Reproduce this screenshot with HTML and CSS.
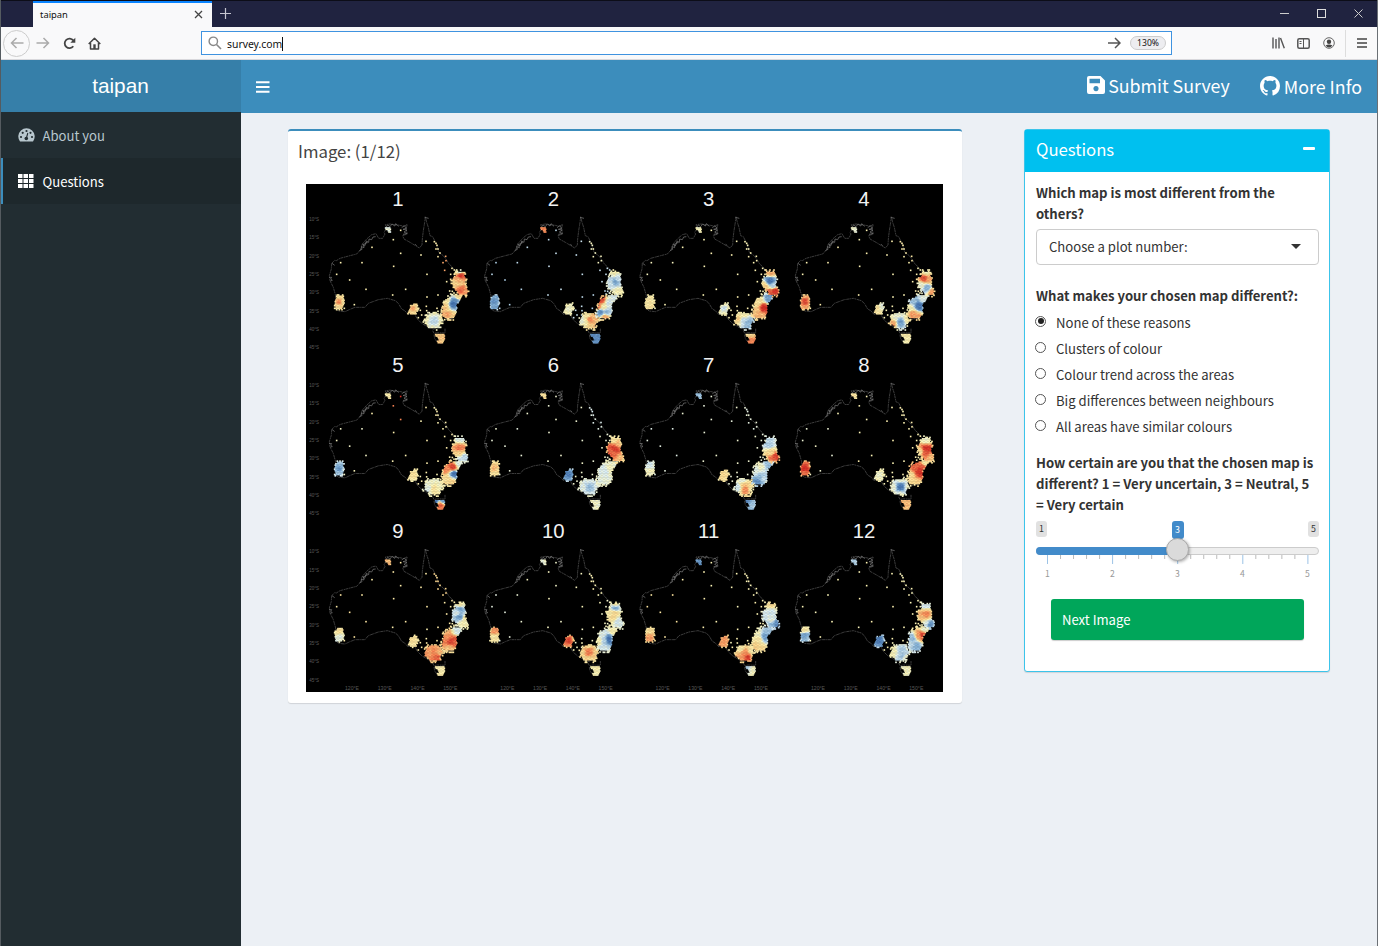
FILE: index.html
```html
<!DOCTYPE html>
<html lang="en">
<head>
<meta charset="utf-8">
<title>taipan</title>
<link rel="stylesheet" href="styles.css">
</head>
<body>
<div class="window">
  <div class="tabbar">
    <div class="tab"><span>taipan</span>
      <svg width="9" height="9" viewBox="0 0 9 9"><path d="M1 1l7 7M8 1l-7 7" stroke="#444" stroke-width="1.3" fill="none"/></svg>
    </div>
    <svg class="newtab" width="11" height="11" viewBox="0 0 11 11"><path d="M5.5 0v11M0 5.5h11" stroke="#c5c5d0" stroke-width="1.2"/></svg>
    <div class="winctl">
      <svg width="9" height="9" viewBox="0 0 9 9"><path d="M0 4.5h9" stroke="#ccc" stroke-width="1"/></svg>
      <svg width="9" height="9" viewBox="0 0 9 9"><rect x=".5" y=".5" width="8" height="8" stroke="#ddd" fill="none"/></svg>
      <svg width="9" height="9" viewBox="0 0 9 9"><path d="M.5.5l8 8M8.5.5l-8 8" stroke="#ccc" stroke-width="1"/></svg>
    </div>
  </div>
  <div class="toolbar">
    <div class="navbtns">
      <span class="back"><svg width="14" height="12" viewBox="0 0 14 12"><path d="M13.500 6H1.500M6.500 1L1.500 6l5 5" stroke="#aaa" stroke-width="1.5" fill="none"/></svg></span>
      <svg class="fwd" width="14" height="12" viewBox="0 0 14 12"><path d="M.5 6h12M7.500 1l5 5-5 5" stroke="#aaa" stroke-width="1.5" fill="none"/></svg>
      <svg class="reload" width="13" height="13" viewBox="0 0 13 13"><path d="M10.300 9.300A4.800 4.800 0 1 1 10.300 3.400" stroke="#444" stroke-width="1.800" fill="none"/><path d="M12.300.8v5H7.300z" fill="#444"/></svg>
      <svg width="13" height="13" viewBox="0 0 13 13"><path d="M.7 7L6.500 1.200 12.300 7M2.500 6v6h8V6" stroke="#444" stroke-width="1.500" fill="none" stroke-linejoin="round"/><path d="M5.300 7.300h2.400V12H5.300z" fill="#444"/></svg>
    </div>
    <div class="urlbar">
      <svg width="14" height="14" viewBox="0 0 14 14"><circle cx="5.300" cy="5.300" r="4.200" stroke="#888" stroke-width="1.400" fill="none"/><path d="M8.500 8.500l4.500 4.500" stroke="#888" stroke-width="1.600"/></svg>
      <span class="url">survey.com</span>
      <svg class="go" width="13" height="12" viewBox="0 0 13 12"><path d="M0 6h12M7 1l5 5-5 5" stroke="#555" stroke-width="1.500" fill="none"/></svg>
      <span class="zoom">130%</span>
    </div>
    <div class="tools">
      <svg width="13" height="12" viewBox="0 0 13 12"><path d="M1 .5v11M4 2v9.500M7 .5v11M8.500 1l3.800 10.300" stroke="#555" stroke-width="1.400" fill="none"/></svg>
      <svg width="13" height="11" viewBox="0 0 13 11"><rect x=".8" y=".8" width="11.400" height="9.400" rx="1.500" stroke="#555" stroke-width="1.500" fill="none"/><path d="M6.500 1v9M2.500 3.500h2M2.500 5.500h2" stroke="#555"/></svg>
      <svg width="12" height="12" viewBox="0 0 12 12"><circle cx="6" cy="6" r="5.300" stroke="#666" stroke-width="1" fill="none"/><circle cx="6" cy="4.700" r="2.200" fill="#444"/><path d="M2.500 8.500q3.500-2 7 0-1.500 2-3.500 2t-3.500-2z" fill="#444"/></svg>
      <i class="sep"></i>
      <svg width="10" height="10" viewBox="0 0 10 10"><path d="M0 1h10M0 5h10M0 9h10" stroke="#444" stroke-width="1.400"/></svg>
    </div>
  </div>

  <div class="app">
    <aside class="sidebar">
      <div class="logo">taipan</div>
      <a class="item"><svg width="17" height="14" viewBox="0 0 17 14"><path d="M2 13.500A8.200 8.200 0 1 1 15 13.500z" fill="#b8c7ce"/><g fill="#222d32"><circle cx="3" cy="9" r="1.100"/><circle cx="4.700" cy="4.800" r="1.100"/><circle cx="8.500" cy="3" r="1.100"/><circle cx="12.500" cy="4.800" r="1.100"/><circle cx="14" cy="9" r="1.100"/><circle cx="8.300" cy="10.500" r="1.800"/></g><path d="M8.300 10.500L9.800 5" stroke="#222d32" stroke-width="1.100"/></svg><span>About you</span></a>
      <a class="item active"><svg width="16" height="14" viewBox="0 0 16 14"><path fill="#fff" d="M0 0h4.500v4H0zM5.500 0H10v4H5.500zM11 0h4.500v4H11zM0 5h4.500v4H0zM5.500 5H10v4H5.500zM11 5h4.500v4H11zM0 10h4.500v4H0zM5.500 10H10v4H5.500zM11 10h4.500v4H11z"/></svg><span>Questions</span></a>
    </aside>
    <div class="main">
      <header class="navbar">
        <svg width="14" height="12" viewBox="0 0 14 12"><path d="M0 1.300h13.500M0 6h13.500M0 10.700h13.500" stroke="#fff" stroke-width="2.100"/></svg>
        <div class="links">
          <a><svg width="18" height="18" viewBox="0 0 18 18"><path fill="#fff" fill-rule="evenodd" d="M2 0h11.500L18 4.500V16q0 2-2 2H2q-2 0-2-2V2Q0 0 2 0zM2.500 2.700v4.500H13V2.700zM9 10a2.600 2.600 0 1 0 .01 0z"/></svg><span>Submit Survey</span></a>
          <a><svg width="20" height="20" viewBox="0 0 16 16"><path fill="#fff" d="M8 0C3.580 0 0 3.580 0 8c0 3.540 2.290 6.530 5.470 7.590.4.070.55-.17.55-.38 0-.19-.01-.82-.01-1.490-2.010.37-2.530-.49-2.690-.94-.09-.23-.48-.94-.82-1.130-.28-.15-.68-.52-.01-.53.63-.01 1.080.58 1.230.82.72 1.210 1.870.87 2.330.66.07-.52.28-.87.51-1.070-1.780-.2-3.640-.89-3.640-3.950 0-.87.31-1.590.82-2.150-.08-.2-.36-1.020.08-2.120 0 0 .67-.21 2.200.82.64-.18 1.320-.27 2-.27s1.360.09 2 .27c1.530-1.040 2.200-.82 2.200-.82.44 1.100.16 1.920.08 2.120.51.56.82 1.270.82 2.150 0 3.070-1.870 3.750-3.650 3.950.29.25.54.73.54 1.480 0 1.070-.01 1.930-.01 2.200 0 .21.15.46.55.38A8 8 0 0 0 16 8c0-4.420-3.580-8-8-8z"/></svg><span>More Info</span></a>
        </div>
      </header>
      <section class="content">
        <div class="box plot">
          <h3>Image: (1/12)</h3>
          <svg id="maps" viewBox="0 0 1911 1524"></svg>
        </div>
        <div class="box questions">
          <div class="qhead"><span>Questions</span><i class="minus"></i></div>
          <div class="qbody">
            <label class="q">Which map is most different from the<br>others?</label>
            <div class="select"><span>Choose a plot number:</span><i class="caret"></i></div>
            <label class="q second">What makes your chosen map different?:</label>
            <div class="radio on"><i></i><span>None of these reasons</span></div>
            <div class="radio"><i></i><span>Clusters of colour</span></div>
            <div class="radio"><i></i><span>Colour trend across the areas</span></div>
            <div class="radio"><i></i><span>Big differences between neighbours</span></div>
            <div class="radio"><i></i><span>All areas have similar colours</span></div>
            <label class="q third">How certain are you that the chosen map is<br>different? 1 = Very uncertain, 3 = Neutral, 5<br>= Very certain</label>
            <div class="slider">
              <div class="badges"><b>1</b><b class="cur">3</b><b>5</b></div>
              <div class="track"><div class="fill"></div><div class="knob"></div></div>
              <svg id="ticks" width="283" height="10" viewBox="0 0 283 10"></svg>
              <div class="nums"><span>1</span><span>2</span><span>3</span><span>4</span><span>5</span></div>
            </div>
            <div class="next">Next Image</div>
          </div>
        </div>
      </section>
    </div>
  </div>
</div>
<script src="maps.js"></script>
</body>
</html>
```
FILE: styles.css
```css
* { box-sizing: border-box; }
body { margin: 0; font-family: "Noto Sans CJK SC", "Noto Sans", sans-serif; font-size: 13.100px; color: #333; }
svg { display: block; flex: none; }
.window { width: 1378px; height: 946px; display: flex; flex-direction: column; overflow: hidden; border-left: 1px solid #555b60; border-right: 1px solid #6b7075; background: #ecf0f5; }
.tabbar { height: 27px; flex: none; background: #202340; border-top: 1px solid #0c0d18; display: flex; align-items: center; }
.tab { width: 179px; height: 26px; margin-left: 32px; background: #f9f9fa; border-top: 2px solid #0a84ff; display: flex; align-items: center; justify-content: space-between; padding: 0 9px 1px 7px; font: 9.400px "Noto Sans", sans-serif; color: #111; }
.newtab { margin: -2px 0 0 8px; }
.winctl { margin-left: auto; display: flex; gap: 28px; padding: 0 14px 1px 0; }
.toolbar { height: 33px; flex: none; background: #f9f9fa; border-bottom: 1px solid #d8d8dc; display: flex; align-items: center; }
.navbtns { width: 200px; display: flex; align-items: center; padding-left: 2px; }
.back { width: 27px; height: 27px; border: 1px solid #ccc; border-radius: 50%; display: flex; align-items: center; justify-content: center; }
.fwd { margin-left: 6px; }
.reload { margin: 0 12px 0 13px; }
.urlbar { width: 971px; height: 24px; border: 1px solid #3f93e0; background: #fff; display: flex; align-items: center; padding: 0 5px 0 6px; font: 11px "Noto Sans", sans-serif; color: #111; }
.url { margin-left: 5px; border-right: 1px solid #111; line-height: 14px; font-size: 10.400px; margin-top: 1px; }
.go { margin-left: auto; }
.zoom { margin-left: 9px; width: 36px; height: 14px; border: 1px solid #ccc; border-radius: 7px; background: #ededf0; font-size: 8.600px; line-height: 12px; text-align: center; }
.tools { margin-left: auto; display: flex; align-items: center; gap: 13px; padding-right: 10px; }
.tools svg:first-child { margin-right: -1px; }
.sep { width: 1px; height: 27px; background: #ddd; margin-right: -2px; margin-left: -3px; }
.app { flex: 1; display: flex; min-height: 0; }
.sidebar { width: 240px; background: #222d32; flex: none; }
.logo { height: 52px; background: #367fa9; color: #fff; font: 20.800px/52px "Liberation Sans", Arial, sans-serif; text-align: center; padding-right: 1px; }
.item { height: 46px; display: flex; align-items: center; gap: 7px; padding-left: 17px; color: #b8c7ce; line-height: 20px; }
.item span { padding: 1px 0 0 .5px; }
.item.active { background: #1e282c; color: #fff; border-left: 2px solid #3c8dbc; padding-left: 15px; gap: 8px; }
.main { flex: 1; }
.navbar { height: 53px; background: #3c8dbc; display: flex; align-items: center; justify-content: space-between; padding: 0 15px; color: #fff; }
.links { display: flex; gap: 30px; font-size: 17.800px; }
.links a { display: flex; align-items: center; gap: 4px; line-height: 26px; white-space: nowrap; }
.links a svg { margin-top: -2px; }
.links a span { margin-top: -2px; }
.links a:first-child svg { margin-top: -3px; }
.links a:first-child span { margin-top: -3px; }
.links a:first-child { gap: 3px; }
.content { display: flex; align-items: flex-start; justify-content: space-between; padding: 16px 47px 0; }
.box { background: #fff; border-radius: 3px; box-shadow: 0 1px 1px rgba(0,0,0,.12); }
.plot { width: 674px; height: 574px; border-top: 2px solid #3c8dbc; padding: 1px 18px 0; }
.plot h3 { margin: 0 0 0 -8px; font-weight: 400; font-size: 16.800px; line-height: 38px; height: 52px; color: #444; }
#maps { width: 637px; height: 508px; background: #000; font-family: "Liberation Sans", Arial, sans-serif; }
.questions { width: 306px; height: 543px; border: 1px solid #3cc4ea; border-radius: 3px; }
.qhead { height: 42px; background: #00c0ef; color: #fff; font-size: 16.700px; line-height: 39px; display: flex; justify-content: space-between; padding: 0 14px 0 11px; }
.minus { width: 12px; height: 3px; background: #fff; margin-top: 17px; border-radius: 1px; }
.qbody { padding: 11px 10px 0 11px; }
.q { display: block; font-weight: 700; font-size: 13.130px; line-height: 20.800px; white-space: nowrap; }
.select { margin-top: 4px; height: 36px; border: 1px solid #ccc; border-radius: 4px; display: flex; align-items: center; justify-content: space-between; padding: 0 17px 0 12px; }
.caret { border: 5px solid transparent; border-top-color: #333; border-bottom: 0; }
.second { margin: 21px 0 3px; }
.radio { height: 26px; display: flex; align-items: center; gap: 10px; line-height: 26px; }
.radio i { width: 11px; height: 11px; border: 1px solid #555; border-radius: 50%; margin: -2px 0 0 -1px; display: flex; align-items: center; justify-content: center; }
.radio span { padding-top: 1px; }
.radio.on i::after { content: ""; width: 6px; height: 6px; border-radius: 50%; background: #222; }
.third { margin-top: 14px; }
.slider { margin-top: 5px; height: 78px; }
.badges { display: flex; justify-content: space-between; height: 26px; }
.badges b { font-weight: 400; font-size: 8.800px; line-height: 16px; height: 16px; width: 11px; text-align: center; background: #e1e1e1; border-radius: 3px; }
.badges .cur { background: #428bca; color: #fff; height: 18px; line-height: 18px; width: 12px; }
.track { height: 8px; border: 1px solid #ccc; border-radius: 8px; background: #eee; position: relative; }
.fill { width: 50%; height: 8px; margin: -1px; border-radius: 8px 0 0 8px; background: #428bca; }
.knob { position: absolute; left: 129px; top: -10px; width: 23px; height: 23px; border-radius: 50%; background: #dadada; border: 1px solid #aaa; box-shadow: 1px 1px 3px rgba(0,0,0,.3); }
.nums { display: flex; justify-content: space-between; padding: 0 8px; font-size: 8.600px; line-height: 12px; color: #999; margin-top: 2px; }
.nums span { width: 7px; text-align: center; }
.next { margin: 0 15px; height: 41px; border-radius: 3px; background: #00a65a; color: #fff; line-height: 42px; padding-left: 11px; box-shadow: 0 1px 1px rgba(0,0,0,.2); }
```
FILE: maps.js
```js
// Twelve small maps of Australia, each with coloured hexagon clusters.
const svg = document.getElementById('maps');
let out = '';
const coast = 'M95 238L104 229 109 230 120 223 150 215 170 210 181 198 187 180 200 165 215 152 228 149 236 163 248 163 255 150 252 145 260 132 256 122 270 120 284 122 300 124 312 127 322 121 318 135 322 150 308 155 312 165 330 175 350 187 358 192 366 183 367 165 370 140 374 115 376 98 380 115 385 130 390 155 398 158 405 172 412 190 416 205 430 215 440 228 447 240 456 248 470 265M458 402L436 407 402 436 385 430 365 418 352 405 345 392 336 378 325 392 314 380 305 375 295 358 286 350 262 343 235 347 205 358 195 370 165 370 150 376 135 383 115 381 106 372 107 335 100 310 90 290 88 275 94 255 95 238M398 440l4 8 10-2 23 1v-13M402 452l2 12 8 10 12 4 10-14';
const rough = 'M178 200l8-4-2-8 8 3-2-10 8-2 1-8 7 4 1-10 8 2 4-8 8-1M187 180l7 6 3-10 6 0M258 130l5-7 7 5 6-8 8 6 3-7 9 8M305 131l8-6 6 8-10 3 12 2-9 6 9 5-12 2M87 280l8 0-3 5 5 4-6 2M96 238l8 6M345 181l5 4M374 100l12 3';
const dots = [[280,167],[216,190],[302,208],[363,213],[378,172],[403,173],[122,236],[186,236],[281,247],[110,271],[149,288],[381,271],[198,316],[317,316],[278,333],[381,339],[414,333],[163,362],[302,139],[133,373],[379,367],[361,379],[355,401],[434,259],[456,253],[463,258],[452,271],[440,293],[414,218],[420,207],[429,236],[437,217],[438,230],[449,321],[457,322],[462,327],[434,407],[380,380],[411,373],[408,178],[411,184],[408,195],[414,195],[424,378],[365,393],[379,393],[428,367],[463,271],[452,330]];
const shapes = {
  P: [[111,334],[129,337],[131,356],[125,376],[107,375],[105,355]],
  A: [[331,364],[350,358],[354,374],[347,392],[337,391],[325,387],[330,376]],
  M: [[379,397],[390,388],[412,387],[425,396],[429,410],[421,420],[418,434],[391,434],[384,423],[373,419]],
  S: [[443,341],[463,335],[486,333],[480,348],[469,362],[468,386],[459,403],[438,404],[427,393],[429,375],[432,355]],
  B: [[469,263],[490,263],[497,285],[495,300],[503,318],[500,331],[481,334],[471,322],[459,309],[457,288],[465,278]],
  T: [[402,449],[435,449],[435,463],[431,472],[425,479],[413,479],[412,472],[417,467],[414,461],[408,458]],
  D: [[256,129],[273,129],[273,146],[267,146],[264,138],[256,136]]
};
const ramp = [[-1,69,117,180],[-.6,132,178,216],[-.25,220,239,246],[0,253,246,184],[.3,254,217,142],[.6,252,141,89],[1,215,48,39]];
function colour(v) {
  v = Math.max(-1, Math.min(1, v));
  for (let i = 1; i < ramp.length; i++) if (v <= ramp[i][0]) {
    const a = ramp[i-1], b = ramp[i], t = (v-a[0])/(b[0]-a[0]);
    return 'rgb(' + [1,2,3].map(k => Math.round(a[k]+(b[k]-a[k])*t)).join() + ')';
  }
}
let seed = 7;
const rnd = () => (seed = (seed*16807) % 2147483647) / 2147483647;
function inside(p, x, y) {
  let r = false;
  for (let i = 0, j = p.length-1; i < p.length; j = i++)
    if ((p[i][1] > y) !== (p[j][1] > y) && x < (p[j][0]-p[i][0])*(y-p[i][1])/(p[j][1]-p[i][1])+p[i][0]) r = !r;
  return r;
}
function field(c, x, y) {
  let s = 0, w = 0;
  for (const k of c) { const q = 1/Math.pow((x-k[0])**2+(y-k[1])**2+20, 2.1); s += k[2]*q; w += q; }
  return s/w;
}
// Control points per cluster: [x, y, value]; e = west, interior and north-east dot values.
const two = (x,y,a,b) => [[x,y-12,a],[x,y+12,b]];
const core = (x,y,r,c,o) => [[x,y,c],[x-r,y,o],[x+r,y,o],[x,y-r,o],[x,y+r,o]];
const maps = [
 {e:[.05,.05,.1],D:-.15,P:core(117,354,16,.6,.2),A:core(340,374,17,.45,.2),M:core(402,411,28,-.35,-.02),S:[[460,360,-1],[467,352,-.8],[440,350,.1],[435,370,.35],[445,395,.5],[475,338,.2],[455,400,.3]],B:[[480,264,-.2],[482,274,1],[475,290,.4],[480,300,.35],[485,318,.75],[497,325,.5],[463,300,.3]],T:[[418,462,.35]]},
 {e:[-.4,-.35,-.05],D:.6,P:core(117,354,16,-.8,-.6),A:core(340,374,18,-.1,0),M:[[405,408,.6],[415,404,.4],[380,410,-.15],[405,432,.3],[397,392,.1],[390,415,0]],S:[[440,348,.9],[430,368,.7],[460,355,-.25],[475,342,-.2],[445,370,0],[436,385,-.8],[455,385,-.5],[450,401,.5]],B:[[478,266,0],[480,295,-.65],[490,285,-.3],[466,300,-.25],[488,322,0],[482,330,-.05]],T:[[418,462,-.8]]},
 {e:[-.02,.02,.02],D:-.05,P:two(117,354,.1,.15),A:core(340,374,18,-.3,0),M:[[384,407,.3],[397,411,-.3],[413,418,-.55],[400,390,.05]],S:[[459,372,1],[445,352,.15],[475,344,-.7],[438,380,.4],[453,400,.4],[430,365,.2]],B:[[479,266,.45],[478,292,-1],[488,306,-.4],[493,321,1],[479,326,.8],[463,307,.3]],T:[[418,450,.2],[420,472,.65]]},
 {e:[.05,.04,.1],D:-.1,P:core(117,354,18,.9,.45),A:[[335,372,.2],[348,369,-.15],[340,388,.1]],M:[[380,418,.5],[404,414,-.7],[404,391,-.1],[425,408,.1],[387,400,-.1]],S:[[459,367,-1],[474,344,-.2],[440,352,-.5],[433,372,0],[441,390,.5],[455,400,.5]],B:[[480,265,0],[475,284,.85],[490,287,.5],[484,312,-.6],[499,325,.5],[466,305,-.1]],T:[[418,464,.06]]},
 {e:[-.05,.05,.05],D:.1,P:core(117,354,18,-.75,-.45),A:core(340,374,18,.2,.1),M:[[385,415,-.2],[402,415,.15],[396,395,-.1],[420,410,-.05]],S:[[460,353,.95],[440,357,.6],[463,370,-1],[440,390,.2],[478,342,-.2],[455,398,.3]],B:[[480,267,-.2],[480,295,.7],[480,309,.3],[493,321,-.35],[481,328,-.3]],T:[[404,452,-1],[423,465,.75],[430,452,-.7]]},
 {e:[-.13,-.1,-.22],D:.2,P:core(117,354,20,.4,.2),A:core(340,374,22,-.9,-.6),M:core(404,413,25,-.5,-.2),S:[[450,364,-.25],[467,358,-.02],[443,388,-.15],[475,341,-.1]],B:[[480,265,.15],[480,298,.95],[473,310,.75],[495,325,.4],[492,282,.4]],T:[[418,464,-.08]]},
 {e:[-.18,-.12,-.15],D:-.5,P:two(117,354,-.25,-.05),A:core(340,374,18,.25,.2),M:[[406,418,.6],[401,406,.35],[380,412,-.3],[397,391,-.15],[422,417,.1]],S:[[451,352,-.05],[436,364,-.2],[475,345,-.5],[448,380,-.5],[441,395,-.8],[460,385,-.35]],B:[[480,265,-.35],[476,286,-.4],[480,306,.25],[497,320,.9],[487,329,.75]],T:[[405,453,-.8],[430,465,-.45]]},
 {e:[-.1,.03,.06],D:.15,P:core(117,354,20,1,.7),A:core(340,374,18,-.1,0),M:core(404,411,24,-.95,-.1),S:[[460,365,1],[447,355,.75],[470,353,.85],[434,374,.2],[450,400,.25],[480,339,.1]],B:[[481,268,-.1],[481,297,1],[477,308,.8],[496,325,.4],[465,306,.2]],T:[[418,464,.4]]},
 {e:[.15,.1,.3],D:.4,P:two(117,354,.15,-.15),A:core(340,374,18,.2,.12),M:[[403,410,.6],[385,408,.5],[414,424,.8],[420,410,.4]],S:[[453,375,.9],[442,363,.6],[467,371,.8],[473,347,-.25],[448,398,.35],[435,353,.45]],B:[[480,266,.1],[480,278,-.7],[480,302,-.75],[472,290,-.2],[488,320,.0],[497,306,.1]],T:[[418,464,.05]]},
 {e:[-.15,-.05,.02],D:-.1,P:two(117,354,.55,.1),A:core(340,374,20,.9,.55),M:core(402,408,24,.65,.25),S:[[461,370,-1],[447,373,-.4],[443,352,-.2],[475,344,.05],[450,397,-.25],[432,375,0]],B:[[480,265,.1],[480,275,-.7],[478,290,.25],[472,300,.2],[490,318,-.25],[463,294,.1]],T:[[418,464,.03]]},
 {e:[.15,.02,.02],D:-.75,P:two(117,354,.2,.5),A:core(340,374,20,.55,.45),M:[[402,410,.55],[411,424,.95],[394,423,.5],[390,397,.1],[424,404,.1]],S:[[464,362,-.7],[473,350,-.5],[440,352,-.05],[444,370,.12],[436,390,.3],[454,399,.25]],B:[[480,263,.25],[480,288,-.25],[483,311,-.15],[497,322,-.8],[482,328,-.55]],T:[[405,453,-.4],[430,465,-.05]]},
 {e:[-.02,.02,0],D:-.4,P:[[116,343,.15],[117,357,-.7],[122,370,-.5]],A:core(340,374,20,-.95,-.7),M:[[385,408,0],[404,408,-.4],[418,424,-.1],[410,418,-.5]],S:[[471,356,1],[458,359,.5],[440,366,-.5],[476,340,-.1],[451,390,-.55],[433,385,-.3]],B:[[480,265,-.25],[480,296,.6],[474,307,.35],[480,320,-.2],[494,326,-.8]],T:[[418,464,-.04]]}
];
maps.forEach((m, n) => {
  const c = n % 4, r = (n / 4) | 0;
  out += `<g transform="translate(${c*466-18} ${r*498.5})">`;
  out += `<text x="${294}" y="66" font-size="61" fill="#f2f2f2" text-anchor="middle">${n+1}</text>`;
  if (c === 0) for (let k = 0; k < 8; k++) out += `<text x="57" y="${111+k*55}" font-size="13.5" fill="#5c5c5c" text-anchor="end">${10+k*5}°S</text>`;
  if (r === 2) for (let k = 0; k < 4; k++) out += `<text x="${156+k*98.300}" y="520" font-size="15.5" fill="#585858" text-anchor="middle">${120+k*10}°E</text>`;
  out += `<path d="${coast}" fill="none" stroke="#444" stroke-width="2.600" stroke-dasharray="9 2 4 1"/><path d="${rough}" fill="none" stroke="#777" stroke-width="2.200"/>`;
  for (const [x,y] of dots) {
    let v = x < 200 ? m.e[0] : x > 395 && y < 240 ? m.e[2] : m.e[1];
    if (n === 4 && x === 302 && y < 150) v = 1;
    if (n === 4 && (x === 280 || x === 302) && y > 150 && y < 220) v = .65;
    if (n === 0 && x > 425 && x < 442 && y > 210 && y < 265) v = .5;
    out += `<rect x="${x-2.400}" y="${y-2.400}" width="4.800" height="4.800" fill="${colour(v+(rnd()-.5)*.08)}"/>`;
  }
  for (const key in shapes) {
    const p = shapes[key], ctrl = typeof m[key] === 'number' ? [[264,136,m[key]]] : m[key];
    const xs = p.map(q => q[0]), ys = p.map(q => q[1]);
    const cx = (Math.min(...xs)+Math.max(...xs))/2, cy = (Math.min(...ys)+Math.max(...ys))/2;
    let row = 0;
    for (let y = Math.min(...ys)-9; y <= Math.max(...ys)+9; y += 4, row++)
      for (let x = Math.min(...xs)-9+(row%2)*2; x <= Math.max(...xs)+9; x += 4) {
        const isIn = inside(p, x, y);
        const small = key === 'D' || key === 'T';
        const near = !small && inside(p, cx+(x-cx)*.82, cy+(y-cy)*.82);
        if (!isIn && !(near && rnd() < .38)) continue;
        let v = field(ctrl, x, y) + (rnd()-.5)*.16;
        if (!isIn) v *= .5;
        out += `<rect x="${x-2.500}" y="${y-2.500}" width="5" height="5" fill="${colour(v)}"/>`;
      }
  }
  out += '</g>';
});
svg.innerHTML = out;

// Slider scale: five labelled ticks with four minor ticks between each pair.
let marks = '';
for (let i = 0; i <= 20; i++) {
  const x = 11.500 + i*13.020, big = i % 5 === 0;
  marks += `<path d="M${x} 0v${big ? 9 : 4}" stroke="${big ? '#9cc3e6' : '#bbb'}" stroke-width="1"/>`;
}
document.getElementById('ticks').innerHTML = marks;
```
